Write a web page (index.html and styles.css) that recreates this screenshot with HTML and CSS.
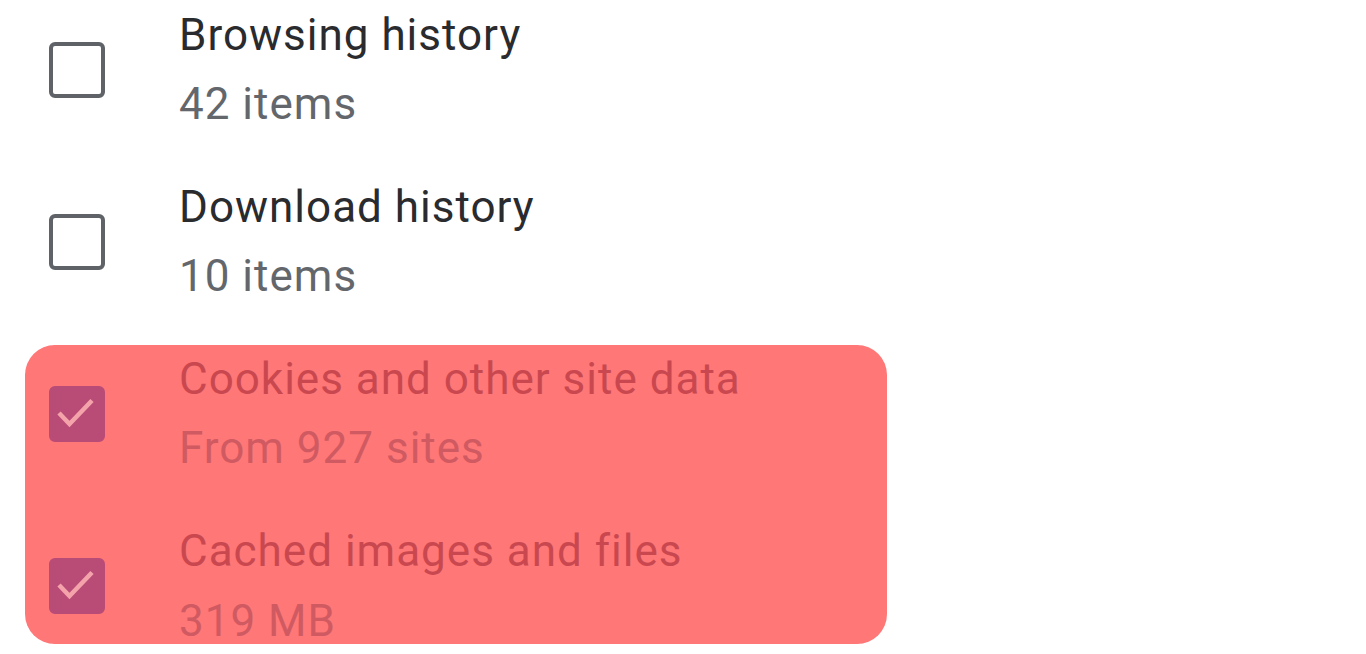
FILE: index.html
```html
<!DOCTYPE html>
<html lang="en">
<head>
    <meta charset="UTF-8">
    <meta name="viewport" content="width=device-width, initial-scale=1.0">
    <title>Clear browsing data</title>
    <link rel="stylesheet" href="styles.css">
</head>
<body>
    <div class="list">
        <div class="row">
            <span class="checkbox"></span>
            <div class="label">
                <div class="title">Browsing history</div>
                <div class="sub">42 items</div>
            </div>
        </div>
        <div class="row">
            <span class="checkbox"></span>
            <div class="label">
                <div class="title">Download history</div>
                <div class="sub">10 items</div>
            </div>
        </div>
        <div class="highlight">
            <div class="row">
                <span class="checkbox checked">
                    <svg viewBox="0 0 47 47" width="47" height="47"><polyline points="6,23 16.5,34 39,10.5" fill="none" stroke="#f4a3ab" stroke-width="4.5"/></svg>
                </span>
                <div class="label">
                    <div class="title">Cookies and other site data</div>
                    <div class="sub">From 927 sites</div>
                </div>
            </div>
            <div class="row">
                <span class="checkbox checked">
                    <svg viewBox="0 0 47 47" width="47" height="47"><polyline points="6,23 16.5,34 39,10.5" fill="none" stroke="#f4a3ab" stroke-width="4.5"/></svg>
                </span>
                <div class="label">
                    <div class="title">Cached images and files</div>
                    <div class="sub last">319 MB</div>
                </div>
            </div>
        </div>
    </div>
</body>
</html>
```
FILE: styles.css
```css
* {
    box-sizing: border-box;
}

body {
    margin: 0;
    background: white;
    font-family: Roboto, "Liberation Sans", sans-serif;
    font-size: 44px;
    letter-spacing: 1px;
    overflow: hidden;
}

.list {
    margin-top: -16px;
}

.row {
    display: flex;
    align-items: center;
    padding: 17px 0 17px 49px;
}

.checkbox {
    width: 56px;
    height: 56px;
    flex-shrink: 0;
    border: 4.5px solid #5f6368;
    border-radius: 6px;
    margin-right: 74px;
}

.checkbox.checked {
    background: #b94b77;
    border-color: #b94b77;
}

.checkbox svg {
    display: block;
}

.label {
    line-height: 69px;
}

.title {
    color: #2a2b2e;
}

.sub {
    color: #63676c;
}

/* last line sits right on the highlight's bottom edge */
.sub.last {
    line-height: 46px;
    padding: 11.5px 0;
}

.highlight {
    margin: 17px 0 0 25px;
    width: 862px;
    height: 299px;
    overflow: hidden;
    background: #ff7777;
    border-radius: 30px;
}

.highlight .row {
    padding-left: 24px;
}

.highlight .row:first-child {
    padding-top: 0;
}

.highlight .title {
    color: #c9484f;
}

.highlight .sub {
    color: #d05a61;
}
```
